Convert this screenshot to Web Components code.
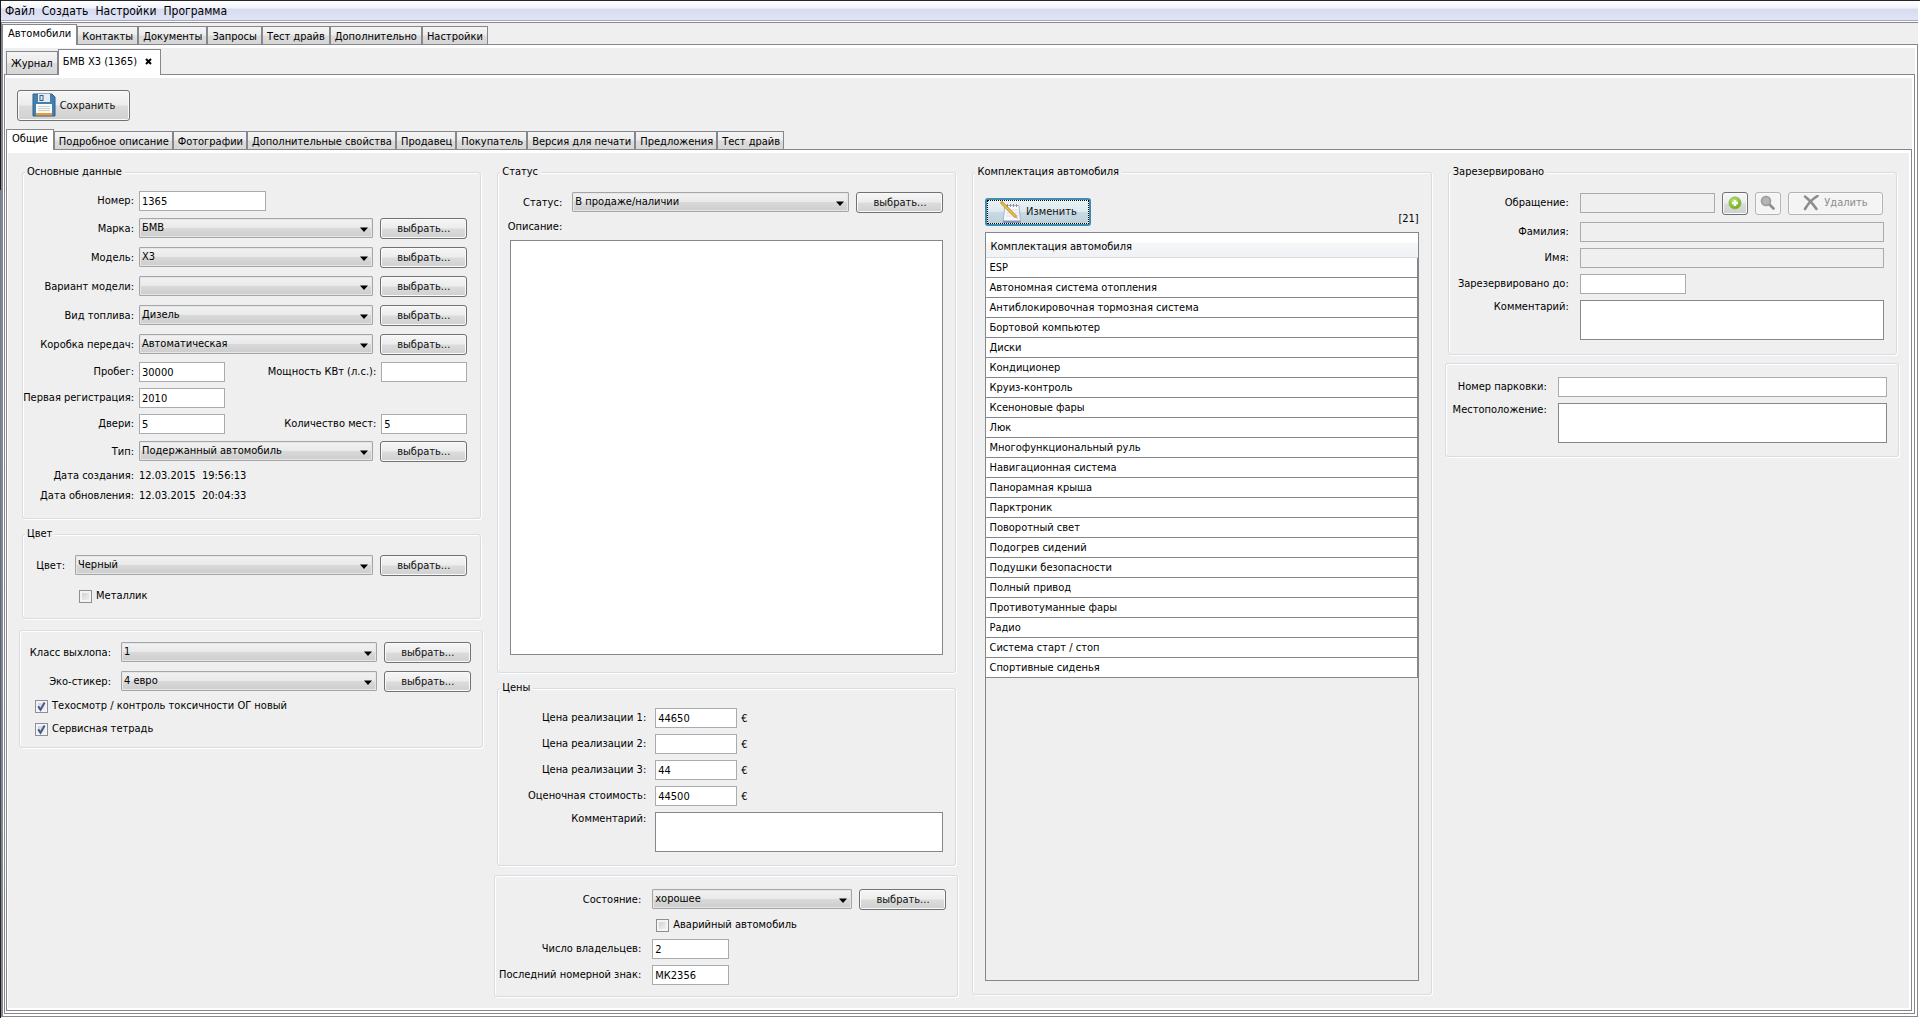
<!DOCTYPE html>
<html lang="ru">
<head>
<meta charset="utf-8">
<title>Автомобили</title>
<style>
  body { margin: 0; }
</style>
</head>
<body>
<car-app></car-app>

<template id="app-menu">
  <style>
    :host { display: block; }
    nav { display: flex; gap: 7px; height: 19px; padding-left: 4px; align-items: center;
      background: linear-gradient(#fff, #f3f5fb 35%, #d7dcf0 45%, #dfe4f5); border-bottom: 1px solid #a9a9b4; }
    button { font: inherit; font-size: 12px; line-height: 16px; padding: 0; border: 0; background: none; color: #000; }
  </style>
  <nav></nav>
</template>

<template id="tab-strip">
  <style>
    :host { display: block; }
    [role=tablist] { display: flex; align-items: flex-end; position: relative; z-index: 1; margin-bottom: -1px; }
    button { font: inherit; line-height: 16px; height: var(--tab-h, 18px); margin: 0 0 1px; border: 1px solid #85878c; border-bottom: 0; border-radius: 0;
      padding: 2px var(--tab-r, 4px) 0 var(--tab-l, 4px); white-space: nowrap; color: #000; background: linear-gradient(#f4f4f4, #ececec 48%, #dcdcdc 52%, #d6d6d6); }
    button[aria-selected=true] { background: #fff; margin: 0; height: calc(var(--tab-h, 18px) + 3px); padding: 0 5px 2px; }
    button.closable { display: flex; align-items: center; gap: 8px; padding: 0 8px 2px 4px; }
    svg { width: 7px; height: 7px; }
  </style>
  <div role="tablist"></div>
</template>

<template id="tab-panel">
  <style>
    :host { display: flex; flex-direction: column; flex: 1; background: #fff; border: 1px solid #85878c; padding: 3px 2px 2px 1px; }
    div { display: flex; flex-direction: column; flex: 1; background: #efefef; }
  </style>
  <div role="tabpanel"><slot></slot></div>
</template>

<template id="group-box">
  <style>
    :host { display: flex; flex-direction: column; }
    :host([wide]) { margin: 0 -2px 0 -3px; }
    fieldset { flex: 1; min-width: 0; margin: 0; padding: 0; border: 1px solid #d6dce1; border-radius: 3px;
      box-shadow: inset 1px 1px #fff, 1px 1px #fff; display: flex; flex-direction: column; }
    legend { margin-left: 2px; padding: 0 3px 0 2px; line-height: 14px; background: #efefef; }
    .body { flex: 1; display: flex; flex-direction: column; padding: var(--pad, 9px 13px 12px); }
  </style>
  <fieldset><div class="body"><slot></slot></div></fieldset>
</template>

<template id="push-button">
  <style>
    :host { display: block; flex: none; width: var(--bw, 87px); height: var(--bh, 21px); }
    button { font: inherit; width: 100%; height: 100%; display: flex; align-items: center; justify-content: center; gap: var(--gap, 4px); padding: 0 0 1px;
      color: #111; border: 1px solid #707173; border-radius: 3px; white-space: nowrap;
      background: linear-gradient(#f6f6f6, #ececec 49%, #dcdcdc 51%, #d0d0d0); box-shadow: inset 0 0 0 1px #fafafa; }
    button:disabled { color: #8c8c8c; border-color: #b1b4b7; background: #f4f4f4; }
    :host([focused]) button { border: 2px solid #3d8db3; background: linear-gradient(#e9f1f4, #dde9ee 49%, #c8dae3 51%, #bcd0da);
      outline: 1px dotted #000; outline-offset: -3px; }
    ::slotted(svg) { display: block; flex: none; }
  </style>
  <button type="button"><slot></slot></button>
</template>

<template id="form-field">
  <style>
    :host { display: flex; padding: 3px 0; align-items: center; min-width: 0; }
    :host([kind=combo]) { padding: 4px 0; }
    :host([kind=text]) { padding: 0; }
    :host([kind=area]) { align-items: flex-start; }
    :host([kind=block]) { flex: 1; flex-direction: column; align-items: stretch; gap: 6px; }
    :host([grow]) { flex: 1; }
    label { flex: none; width: var(--lw, 98px); margin-right: var(--lg, 5px); text-align: right; line-height: 14px; white-space: nowrap; display: flex; justify-content: flex-end; }
    output { line-height: 20px; white-space: pre; }
    input, textarea { font: inherit; box-sizing: border-box; margin: 0; color: #000; background: #fff; border: 1px solid #a9abae; border-radius: 0; outline: 0; }
    input { width: var(--w, 86px); height: 20px; padding: 0 2px; flex: none; min-width: 0; }
    :host([grow]) input { flex: 1; width: auto; }
    textarea { flex: 1; width: auto; height: 40px; min-width: 0; resize: none; border-color: #85878c; display: block; }
    input:disabled { background: #efefef; }
    .combo { flex: 1; display: grid; align-items: center; min-width: 0; height: 21px; padding-bottom: 1px; box-sizing: border-box; }
    .combo > * { grid-area: 1 / 1; }
    select { appearance: none; font: inherit; box-sizing: border-box; width: 100%; height: 20px; margin: 0; padding: 0 20px 1px 2px; color: #000; border: 1px solid #a3a5a8; border-radius: 1px;
      background: linear-gradient(#f2f2f2, #e9e9e9 49%, #d9d9d9 51%, #cdcdcd); box-shadow: inset 0 0 0 1px #e6e6e6; }
    .combo svg { justify-self: end; margin-right: 5px; margin-top: 3px; width: 8px; height: 5px; pointer-events: none; }
    .unit { margin-left: 4px; }
    push-button { margin-left: 7px; }
  </style>
</template>

<template id="check-field">
  <style>
    :host { display: flex; }
    label { display: flex; align-items: center; gap: 4px; line-height: 14px; white-space: nowrap; }
    input { appearance: none; box-sizing: border-box; width: 13px; height: 13px; margin: 0; border: 1px solid #8d8f92; display: grid; place-items: center;
      background: linear-gradient(135deg, #c9cdd2, #f6f6f6); box-shadow: inset 0 0 0 2px #f4f4f4; }
    .box { display: grid; }
    .box > * { grid-area: 1 / 1; }
    svg { width: 13px; height: 13px; pointer-events: none; display: none; }
    input:checked + svg { display: block; }
  </style>
  <label><span class="box"><input type="checkbox"><svg viewBox="0 0 13 13"><path d="M3.2 6.2l2.3 3.6L9.6 2.6" fill="none" stroke="#44598f" stroke-width="2"/></svg></span><slot></slot></label>
</template>

<template id="option-table">
  <style>
    :host { display: flex; flex: 1; flex-direction: column; border: 1px solid #85878c; }
    table { width: 100%; border-collapse: separate; border-spacing: 0; background: #fff; box-sizing: border-box; }
    th { font-weight: normal; text-align: left; height: 25px; padding: 3px 4px 0; box-sizing: border-box; line-height: 14px;
      background: linear-gradient(#fff 38%, #f5f6f8 42%, #f0f2f5); border-bottom: 1px solid #d8dade; }
    td { height: 20px; padding: 0 3px; box-sizing: border-box; line-height: 14px; border-bottom: 1px solid #85878c; border-right: 1px solid #85878c; }
  </style>
  <table><thead><tr><th scope="col"></th></tr></thead><tbody></tbody></table>
</template>

<template id="car-app">
  <style>
    :host { display: flex; flex-direction: column; min-height: 100vh; box-sizing: border-box; padding: 1px 2px 1px 1px; color: #000;
      font-family: "DejaVu Sans Condensed", "DejaVu Sans", "Liberation Sans", sans-serif; font-size: 11px;
      background: linear-gradient(#1c1c22 0 190px, #6f8196 190px 440px, #4a5468 75%, #14161c) left / 1px 100% no-repeat, linear-gradient(#23252c, #23252c) top / 100% 1px no-repeat, #fff; }
    main { flex: 1; display: flex; flex-direction: column; background: #efefef; margin-top: 1px; border-top: 1px solid #85878c; border-left: 1px solid #85878c; }
    main > tab-strip { padding-top: 1px; }
    .docs { padding-top: 1px; margin-left: 2px; --tab-h: 23px; }
    .tools { padding: 12px 11px 8px; }
    .tools push-button { --bw: 113px; --bh: 31px; --gap: 4px; }
    .tabs3 { --tab-l: 4px; --tab-r: 3px; }
    .cols { flex: 1; display: grid; grid-template-columns: 460fr 460fr 460fr 450fr; gap: 16px; padding: 12px 12px 11px 14px; }
    .col { display: flex; flex-direction: column; min-width: 0; }
    .row { display: flex; justify-content: space-between; }
    .g8 { margin-top: 8px; }
    .g11 { margin-top: 11px; }
    .color { --lw: 29px; --lg: 10px; --pad: 10px 13px 15px; }
    .color check-field { margin: 9px 0 0 43px; }
    .eco { --lw: 80px; --lg: 10px; --pad: 7px 11px 5px; }
    .eco check-field { height: 20px; margin: 0 0 3px 4px; }
    .state { flex: 1; --lw: 52px; --lg: 10px; --pad: 9px 12px 14px; }
    .prices { --pad: 10px 12px 10px; --lw: 136px; --lg: 9px; --w: 82px; }
    .cond { margin-top: 9px; --lw: 135px; --lg: 11px; --w: 77px; --pad: 9px 11px 8px; }
    .cond check-field { height: 20px; margin: 1px 0 1px 150px; }
    .equip { flex: 1; margin-bottom: 2px; --pad: 19px 12px 13px; }
    .head { display: flex; justify-content: space-between; align-items: flex-end; margin-bottom: 6px; }
    .head push-button { --bw: 106px; --bh: 28px; --gap: 4px; }
    .head span { line-height: 14px; }
    .reserve { --lw: 108px; --lg: 11px; --pad: 11px 12px 11px; }
    .reserve .first { display: flex; align-items: center; gap: 7px; margin: 0 1px 3px 0; }
    .first push-button { --bw: 26px; --bh: 23px; }
    .first .del { --bw: 95px; --gap: 5px; }
    .until { --w: 106px; }
    .park { margin-top: 8px; --lw: 91px; --lg: 11px; --pad: 10px 11px 10px 10px; }
  </style>
  <app-menu items="Файл|Создать|Настройки|Программа"></app-menu>
  <main>
    <tab-strip tabs="Автомобили|Контакты|Документы|Запросы|Тест драйв|Дополнительно|Настройки" selected="0"></tab-strip>
    <tab-panel>
      <tab-strip class="docs" tabs="Журнал|БМВ X3 (1365)" selected="1" closable></tab-strip>
      <tab-panel>
        <div class="tools">
          <push-button>
            <svg width="24" height="24" viewBox="0 0 24 24">
              <path d="M1 1h19l3 3v19H1z" fill="#4380b0" stroke="#2f618c"/>
              <path d="M6 1h12v8H6z" fill="#e4ebf2"/><path d="M7.500 2h4v6h-4z" fill="#35608a"/><path d="M8.500 3h2v4h-2z" fill="#dfe8f2"/>
              <path d="M4 11h16v11H4z" fill="#fbfbf8"/><path d="M4 20h16v2.500H4z" fill="#e89a3c"/>
              <path d="M6 13.500h12M6 15.500h12M6 17.500h12" stroke="#cfcfca"/>
            </svg>Сохранить</push-button>
        </div>
        <tab-strip class="tabs3" tabs="Общие|Подробное описание|Фотографии|Дополнительные свойства|Продавец|Покупатель|Версия для печати|Предложения|Тест драйв" selected="0"></tab-strip>
        <tab-panel>
          <div class="cols">
            <div class="col">
              <group-box heading="Основные данные">
                <form-field label="Номер:" value="1365" style="--w:127px"></form-field>
                <form-field kind="combo" label="Марка:" value="БМВ"></form-field>
                <form-field kind="combo" label="Модель:" value="X3"></form-field>
                <form-field kind="combo" label="Вариант модели:" value=""></form-field>
                <form-field kind="combo" label="Вид топлива:" value="Дизель"></form-field>
                <form-field kind="combo" label="Коробка передач:" value="Автоматическая"></form-field>
                <div class="row"><form-field label="Пробег:" value="30000"></form-field><form-field label="Мощность КВт (л.с.):"></form-field></div>
                <form-field label="Первая регистрация:" value="2010"></form-field>
                <div class="row"><form-field label="Двери:" value="5"></form-field><form-field label="Количество мест:" value="5"></form-field></div>
                <form-field kind="combo" label="Тип:" value="Подержанный автомобиль"></form-field>
                <form-field kind="text" label="Дата создания:" value="12.03.2015  19:56:13"></form-field>
                <form-field kind="text" label="Дата обновления:" value="12.03.2015  20:04:33"></form-field>
              </group-box>
              <group-box class="g8 color" heading="Цвет">
                <form-field kind="combo" label="Цвет:" value="Черный"></form-field>
                <check-field>Металлик</check-field>
              </group-box>
              <group-box class="g11 eco" wide>
                <form-field kind="combo" label="Класс выхлопа:" value="1"></form-field>
                <form-field kind="combo" label="Эко-стикер:" value="4 евро"></form-field>
                <check-field checked>Техосмотр / контроль токсичности ОГ новый</check-field>
                <check-field checked>Сервисная тетрадь</check-field>
              </group-box>
            </div>
            <div class="col">
              <group-box class="state" heading="Статус">
                <form-field kind="combo" label="Статус:" value="В продаже/наличии"></form-field>
                <form-field kind="block" label="Описание:"></form-field>
              </group-box>
              <group-box class="g8 prices" heading="Цены">
                <form-field label="Цена реализации 1:" value="44650" unit="€"></form-field>
                <form-field label="Цена реализации 2:" unit="€"></form-field>
                <form-field label="Цена реализации 3:" value="44" unit="€"></form-field>
                <form-field label="Оценочная стоимость:" value="44500" unit="€"></form-field>
                <form-field kind="area" label="Комментарий:"></form-field>
              </group-box>
              <group-box class="cond" wide>
                <form-field kind="combo" label="Состояние:" value="хорошее"></form-field>
                <check-field>Аварийный автомобиль</check-field>
                <form-field label="Число владельцев:" value="2"></form-field>
                <form-field label="Последний номерной знак:" value="МК2356"></form-field>
              </group-box>
            </div>
            <div class="col">
              <group-box class="equip" heading="Комплектация автомобиля">
                <div class="head">
                  <push-button focused>
                    <svg width="22" height="22" viewBox="0 0 22 22">
                      <path d="M5 4.500h14l1.500 16H3z" fill="#f7f8fc" stroke="#a9b4cf"/>
                      <path d="M3 19.500h17.500V22H3z" fill="#7f95c4"/>
                      <path d="M6.500 9h12M6 12h13M6 15h13" stroke="#d9dcea"/>
                      <path d="M7.500 3v3M10.500 3v3M13.500 3v3M16.500 3v3" stroke="#8b8f95"/>
                      <path d="M1 1l15 15" stroke="#b97a1c" stroke-width="3"/><path d="M1.500 1.500l14 14" stroke="#f6c945" stroke-width="1.600"/>
                      <path d="M14.500 16.500l3.500 1.500-1.500-3.500z" fill="#d8a878"/>
                    </svg>Изменить</push-button>
                  <span>[21]</span>
                </div>
                <option-table heading="Комплектация автомобиля" rows="ESP|Автономная система отопления|Антиблокировочная тормозная система|Бортовой компьютер|Диски|Кондиционер|Круиз-контроль|Ксеноновые фары|Люк|Многофункциональный руль|Навигационная система|Панорамная крыша|Парктроник|Поворотный свет|Подогрев сидений|Подушки безопасности|Полный привод|Противотуманные фары|Радио|Система старт / стоп|Спортивные сиденья"></option-table>
              </group-box>
            </div>
            <div class="col">
              <group-box class="reserve" heading="Зарезервировано">
                <div class="first">
                  <form-field grow disabled label="Обращение:"></form-field>
                  <push-button hint="Добавить"><svg width="14" height="14" viewBox="0 0 14 14"><defs><radialGradient id="g" cx=".4" cy=".3" r=".8"><stop offset="0" stop-color="#c3e572"/><stop offset="1" stop-color="#5fa30f"/></radialGradient></defs><circle cx="7" cy="7" r="6" fill="url(#g)" stroke="#8cbd4b"/><path d="M7 4v6M4 7h6" stroke="#fff" stroke-width="2.400"/></svg></push-button>
                  <push-button hint="Найти" disabled><svg width="15" height="15" viewBox="0 0 15 15"><path d="M9 9l4.500 4.500" stroke="#8f8f8f" stroke-width="2.600" stroke-linecap="round"/><circle cx="6" cy="6" r="4.500" fill="#b4b4b4" stroke="#9b9b9b" stroke-width="1.600"/></svg></push-button>
                  <push-button class="del" disabled><svg width="16" height="16" viewBox="0 0 16 16"><path d="M2 1.500Q8 6 13.500 14M14.500 1Q6.500 6 2 14" fill="none" stroke="#8d8d8d" stroke-width="2.600" stroke-linecap="round"/></svg>Удалить</push-button>
                </div>
                <form-field grow disabled label="Фамилия:"></form-field>
                <form-field grow disabled label="Имя:"></form-field>
                <form-field class="until" label="Зарезервировано до:"></form-field>
                <form-field kind="area" label="Комментарий:"></form-field>
              </group-box>
              <group-box class="park" wide>
                <form-field grow label="Номер парковки:"></form-field>
                <form-field kind="area" label="Местоположение:"></form-field>
              </group-box>
            </div>
          </div>
        </tab-panel>
      </tab-panel>
    </tab-panel>
  </main>
</template>

<script>
class Base extends HTMLElement {
  constructor() {
    super();
    const root = this.attachShadow({ mode: 'open' });
    root.append(document.getElementById(this.constructor.tag).content.cloneNode(true));
  }
  $(s) { return this.shadowRoot.querySelector(s); }
  list(name) { return (this.getAttribute(name) || '').split('|'); }
  static register(tag) { this.tag = tag; customElements.define(tag, this); }
}

const make = (tag, props = {}) => Object.assign(document.createElement(tag), props);

class AppMenu extends Base {
  connectedCallback() {
    this.$('nav').replaceChildren(...this.list('items').map(t => make('button', { type: 'button', textContent: t })));
  }
}

class TabStrip extends Base {
  connectedCallback() {
    const sel = +this.getAttribute('selected');
    this.$('[role=tablist]').replaceChildren(...this.list('tabs').map((t, i) => {
      const b = make('button', { type: 'button', textContent: t });
      b.setAttribute('role', 'tab');
      b.setAttribute('aria-selected', i === sel);
      if (i === sel && this.hasAttribute('closable')) {
        b.className = 'closable';
        b.insertAdjacentHTML('beforeend', '<svg viewBox="0 0 7 7"><path d="M1 1l5 5M6 1L1 6" stroke="#000" stroke-width="2"/></svg>');
      }
      return b;
    }));
  }
}

class TabPanel extends Base {}

class GroupBox extends Base {
  connectedCallback() {
    const h = this.getAttribute('heading');
    if (h && !this.$('legend')) this.$('fieldset').prepend(make('legend', { textContent: h }));
  }
}

class PushButton extends Base {
  connectedCallback() {
    const b = this.$('button');
    b.disabled = this.hasAttribute('disabled');
    const hint = this.getAttribute('hint');
    if (hint) b.setAttribute('aria-label', hint);
  }
}

class FormField extends Base {
  connectedCallback() {
    if (this.$('label')) return;
    const kind = this.getAttribute('kind') || 'input';
    const value = this.getAttribute('value') || '';
    const root = this.shadowRoot;
    root.append(make('label', { htmlFor: 'c', textContent: this.getAttribute('label') }));
    if (kind === 'combo') {
      const box = make('div', { className: 'combo' });
      const select = make('select', { id: 'c' });
      select.append(make('option', { textContent: value }));
      box.append(select);
      box.insertAdjacentHTML('beforeend', '<svg viewBox="0 0 8 5"><path d="M0 .5h8L4 5z"/></svg>');
      root.append(box, make('push-button', { textContent: 'выбрать...' }));
    } else if (kind === 'text') {
      root.append(make('output', { id: 'c', textContent: value }));
    } else if (kind === 'area' || kind === 'block') {
      root.append(make('textarea', { id: 'c' }));
    } else {
      root.append(make('input', { id: 'c', type: 'text', value, disabled: this.hasAttribute('disabled') }));
      const unit = this.getAttribute('unit');
      if (unit) root.append(make('span', { className: 'unit', textContent: unit }));
    }
  }
}

class CheckField extends Base {
  connectedCallback() { this.$('input').checked = this.hasAttribute('checked'); }
}

class OptionTable extends Base {
  connectedCallback() {
    this.$('th').textContent = this.getAttribute('heading');
    this.$('tbody').replaceChildren(...this.list('rows').map(t => {
      const tr = make('tr');
      tr.append(make('td', { textContent: t }));
      return tr;
    }));
  }
}

class CarApp extends Base {}

AppMenu.register('app-menu');
TabStrip.register('tab-strip');
TabPanel.register('tab-panel');
GroupBox.register('group-box');
PushButton.register('push-button');
FormField.register('form-field');
CheckField.register('check-field');
OptionTable.register('option-table');
CarApp.register('car-app');
</script>
</body>
</html>
